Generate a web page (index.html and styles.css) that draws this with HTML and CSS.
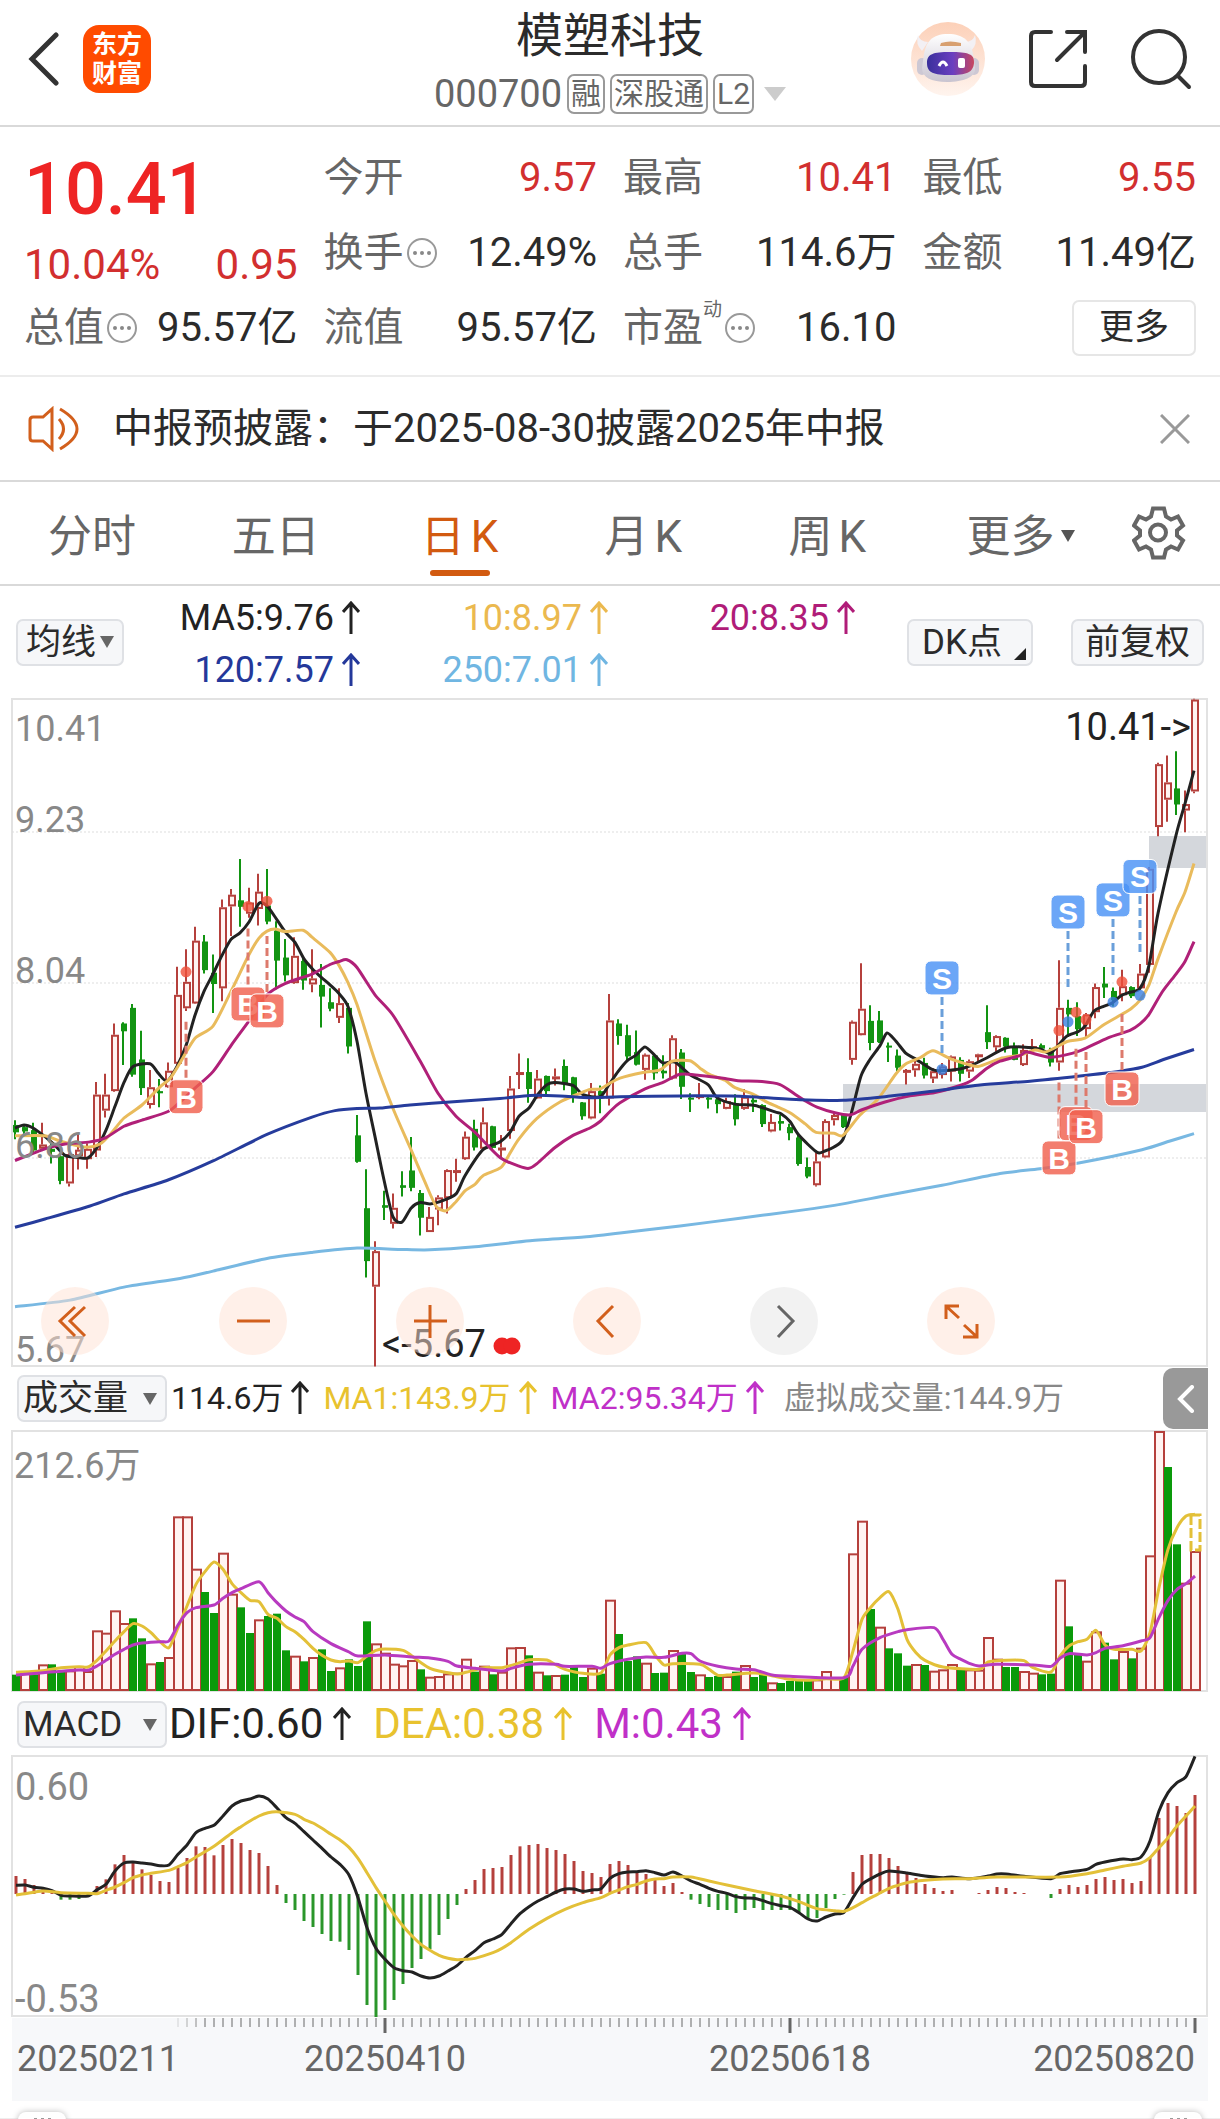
FILE: index.html
```html
<!DOCTYPE html>
<html lang="zh-CN">
<head>
<meta charset="utf-8">
<meta name="viewport" content="width=device-width, initial-scale=1">
<title>模塑科技 000700</title>
<link rel="stylesheet" href="styles.css">
</head>
<body>
<svg class="defs" aria-hidden="true">
  <symbol id="up" viewBox="0 0 18 34"><path d="M9 33V3M1 11 9 2l8 9" fill="none" stroke="currentColor" stroke-width="3"/></symbol>
  <symbol id="info" viewBox="0 0 32 32"><circle cx="16" cy="16" r="14" fill="none" stroke="#999" stroke-width="2"/><g fill="#888"><circle cx="9" cy="16" r="2"/><circle cx="16" cy="16" r="2"/><circle cx="23" cy="16" r="2"/></g></symbol>
</svg>

<header class="topbar">
  <div class="topbar-side">
    <button class="icon-btn" aria-label="返回"><svg width="32" height="54" viewBox="0 0 32 54"><path d="M28 3 4 27l24 24" fill="none" stroke="#333" stroke-width="5" stroke-linecap="round"/></svg></button>
    <a class="brand" href="#"><span>东方</span><span>财富</span></a>
  </div>
  <div class="heading">
    <h1>模塑科技</h1>
    <button class="code">000700<span class="tag">融</span><span class="tag">深股通</span><span class="tag">L2</span><i class="tri tri-light"></i></button>
  </div>
  <div class="topbar-side topbar-tools">
    <button class="icon-btn" aria-label="智能助手"><svg width="76" height="76" viewBox="0 0 76 76">
      <defs>
        <linearGradient id="halo" x1="0" y1="0" x2="0" y2="1"><stop offset="0" stop-color="#fcd0b8"/><stop offset="1" stop-color="#fff4ee"/></linearGradient>
        <linearGradient id="visor" x1="0" y1="0" x2="1" y2="0"><stop offset="0" stop-color="#3a2f9c"/><stop offset=".55" stop-color="#6a3fc0"/><stop offset="1" stop-color="#c8475e"/></linearGradient>
        <linearGradient id="shell" x1="0" y1="0" x2="0" y2="1"><stop offset="0" stop-color="#fff"/><stop offset="1" stop-color="#c9c4d0"/></linearGradient>
      </defs>
      <circle cx="38" cy="38" r="37" fill="url(#halo)"/>
      <path d="M8 14q-3 9 4 16l6-9q-8 0-10-7zM65 14q3 9-4 16l-6-9q8 0 10-7z" fill="#f3f0f4"/>
      <rect x="7" y="37" width="10" height="17" rx="5" fill="#cdc8d4"/><rect x="59" y="37" width="10" height="17" rx="5" fill="#cdc8d4"/>
      <path d="M38 13c16 0 23 8 25 20l2 14c1 9-12 14-28 14S12 56 12 47l2-14c2-12 8-20 24-20z" fill="url(#shell)"/>
      <path d="M31 22q9-3 20 0v3H30z" fill="#d8a070"/>
      <path d="M40 31c18 0 25 2 24 11-1 10-8 12-24 12S17 52 17 42c0-9 6-11 23-11z" fill="url(#visor)"/>
      <path d="M29 45q4-8 8 0" fill="none" stroke="#fff" stroke-width="3"/><rect x="48" y="37" width="7" height="10" rx="2" fill="#fff"/>
    </svg></button>
    <button class="icon-btn" aria-label="分享"><svg width="60" height="60" viewBox="0 0 60 60"><path d="M23 3H7q-4 0-4 4v46q0 4 4 4h46q4 0 4-4V37M39 3h18v20M56 4 29 31" fill="none" stroke="#333" stroke-width="4" stroke-linecap="round"/></svg></button>
    <button class="icon-btn" aria-label="搜索"><svg width="62" height="62" viewBox="0 0 62 62"><circle cx="29" cy="29" r="26" fill="none" stroke="#333" stroke-width="4"/><path d="m48 48 11 11" stroke="#333" stroke-width="4" stroke-linecap="round"/></svg></button>
  </div>
</header>

<section class="quote">
  <div class="price">10.41</div>
  <div class="pair change up"><span>10.04%</span><span>0.95</span></div>
  <div class="pair c2 r1"><span class="k">今开</span><span class="up">9.57</span></div>
  <div class="pair c3 r1"><span class="k">最高</span><span class="up">10.41</span></div>
  <div class="pair c4 r1"><span class="k">最低</span><span class="up">9.55</span></div>
  <div class="pair c2 r2"><span class="k">换手<svg class="info"><use href="#info"/></svg></span><span>12.49%</span></div>
  <div class="pair c3 r2"><span class="k">总手</span><span>114.6万</span></div>
  <div class="pair c4 r2"><span class="k">金额</span><span>11.49亿</span></div>
  <div class="pair c1 r3"><span class="k">总值<svg class="info"><use href="#info"/></svg></span><span>95.57亿</span></div>
  <div class="pair c2 r3"><span class="k">流值</span><span>95.57亿</span></div>
  <div class="pair c3 r3"><span class="k">市盈<sup>动</sup><svg class="info"><use href="#info"/></svg></span><span>16.10</span></div>
  <div class="pair c4 r3 end"><button class="more">更多</button></div>
</section>

<section class="notice">
  <svg width="52" height="46" viewBox="0 0 52 46" fill="none" stroke="#d25f1c" stroke-width="3"><path d="M24 3v40l-9-8H5q-3 0-3-3V14q0-3 3-3h10zM31 13q9 10 0 20M32 3q34 20 0 40"/></svg>
  <a href="#">中报预披露：于2025-08-30披露2025年中报</a>
  <button class="icon-btn" aria-label="关闭"><svg width="30" height="30" viewBox="0 0 30 30"><path d="m1 1 28 28M29 1 1 29" stroke="#999" stroke-width="3"/></svg></button>
</section>

<nav class="tabs">
  <button>分时</button>
  <button>五日</button>
  <button class="on">日<span>K</span></button>
  <button>月<span>K</span></button>
  <button>周<span>K</span></button>
  <button>更多<i class="tri tri-small"></i></button>
  <button class="gear" aria-label="设置"><svg width="54" height="54" viewBox="-1 0 54 53" fill="none" stroke="#666" stroke-width="4"><path d="M20 2h11l2 8 5 3 7-3 5 9-6 5v5l6 5-5 9-7-3-5 3-2 8H20l-2-8-5-3-7 3-5-9 6-5v-5l-6-5 5-9 7 3 5-3z"/><circle cx="25" cy="26" r="8"/></svg></button>
</nav>

<section class="legend">
  <button class="chip">均线<i class="tri tri-dark"></i></button>
  <div class="averages">
    <span class="ma5">MA5:9.76<svg class="arrow"><use href="#up"/></svg></span>
    <span class="ma10">10:8.97<svg class="arrow"><use href="#up"/></svg></span>
    <span class="ma20">20:8.35<svg class="arrow"><use href="#up"/></svg></span>
    <span class="ma120">120:7.57<svg class="arrow"><use href="#up"/></svg></span>
    <span class="ma250">250:7.01<svg class="arrow"><use href="#up"/></svg></span>
  </div>
  <div class="options">
    <button class="chip chip-dk">DK点<i class="corner"></i></button>
    <button class="chip chip-adjust">前复权</button>
  </div>
</section>

<section class="price-panel">
  <svg id="kline" class="chart" viewBox="0 0 1220 677" role="img" aria-label="日K线"></svg>
  <div class="controls">
    <button aria-label="最早"><svg viewBox="0 0 68 68"><path d="M34 20 19 34l15 15M44 20 29 34l15 15"/></svg></button>
    <button aria-label="缩小"><svg viewBox="0 0 68 68"><path d="M18 34h33"/></svg></button>
    <button aria-label="放大"><svg viewBox="0 0 68 68"><path d="M18 34h33M34 18v33"/></svg></button>
    <button aria-label="向左"><svg viewBox="0 0 68 68"><path d="M40 19 25 34l15 16"/></svg></button>
    <button aria-label="向右" class="off"><svg viewBox="0 0 68 68"><path d="m28 19 15 15-15 16"/></svg></button>
    <button aria-label="全屏"><svg viewBox="0 0 68 68"><path d="M32 19H19v13M20 20l12 11M50 37v13H36M49 49 37 38"/></svg></button>
  </div>
</section>

<section class="indicator">
  <button class="chip chip-wide">成交量<i class="tri tri-dark"></i></button>
  <span class="dark">114.6万<svg class="arrow"><use href="#up"/></svg></span>
  <span class="gold">MA1:143.9万<svg class="arrow"><use href="#up"/></svg></span>
  <span class="violet">MA2:95.34万<svg class="arrow"><use href="#up"/></svg></span>
  <span class="grey">虚拟成交量:144.9万</span>
  <button class="handle" aria-label="展开"><svg width="18" height="28" viewBox="0 0 18 28"><path d="M15 2 3 14l12 12" fill="none" stroke="#fff" stroke-width="4" stroke-linecap="round"/></svg></button>
</section>
<svg id="volume" class="chart" viewBox="0 0 1220 262" role="img" aria-label="成交量"></svg>

<section class="indicator indicator-macd">
  <button class="chip chip-wide">MACD<i class="tri tri-dark"></i></button>
  <span class="dark">DIF:0.60<svg class="arrow"><use href="#up"/></svg></span>
  <span class="gold">DEA:0.38<svg class="arrow"><use href="#up"/></svg></span>
  <span class="violet">M:0.43<svg class="arrow"><use href="#up"/></svg></span>
</section>
<svg id="macd" class="chart" viewBox="0 0 1220 263" role="img" aria-label="MACD"></svg>
<svg id="axis" class="chart" viewBox="0 0 1220 83" role="img" aria-label="日期"></svg>

<div class="range"><button aria-label="开始日期"><i></i><i></i><i></i></button><button aria-label="结束日期"><i></i><i></i><i></i></button></div>
<script src="charts.js"></script>
</body>
</html>
```
FILE: styles.css
```css
* { box-sizing: border-box; }
body {
  margin: 0;
  overflow-x: hidden;
  background: #fff;
  color: #2b2b2b;
  font-family: Roboto, "Noto Sans CJK SC", sans-serif;
}
button { margin: 0; padding: 0; border: 0; background: none; color: inherit; font: inherit; }
a { color: inherit; text-decoration: none; }
svg { display: block; flex: none; }
.defs { display: none; }
.icon-btn { display: flex; }

.tri { border: 6px solid transparent; border-top: 12px solid #555; border-bottom: 0; }
.tri-light { border-width: 14px 11px 0; border-top-color: #ccc; margin-left: 10px; }
.tri-small { display: inline-block; margin-left: 6px; border-width: 12px 7px 0; vertical-align: 10px; }
.tri-dark { border-width: 12px 7px 0; border-top-color: #666; }

.topbar { display: flex; height: 127px; border-bottom: 2px solid #d9d9d9; }
.topbar-side { flex: 1; display: flex; align-items: center; gap: 23px; padding: 0 28px 8px; }
.topbar-tools { justify-content: flex-end; gap: 42px; }
.brand {
  display: flex; flex-direction: column; justify-content: center; align-items: center;
  width: 68px; height: 68px; border-radius: 16px; background: #ff4b00; color: #fff;
  font-size: 25px; line-height: 29px; font-weight: 700;
}
.heading { display: flex; flex-direction: column; align-items: center; }
.heading h1 { margin: 7px 0 0; font-size: 47px; line-height: 58px; font-weight: 400; }
.code { display: flex; align-items: center; margin-top: 9px; color: #666; font-size: 38px; line-height: 40px; }
.tag {
  height: 40px; margin-left: 5px; padding: 0 2px; border: 2px solid #999; border-radius: 7px;
  font-size: 30px; line-height: 35px;
}

.quote {
  display: grid; grid-template-columns: repeat(4, 1fr); column-gap: 26px;
  grid-template-rows: repeat(3, 75px);
  padding: 13px 24px 0; height: 250px; border-bottom: 2px solid #ececec;
  font-size: 40px; line-height: 75px;
}
.price { grid-area: 1 / 1; color: #ee2424; font-size: 72px; font-weight: 500; line-height: 100px; }
.pair { display: flex; justify-content: space-between; align-items: center; white-space: nowrap; }
.change { grid-area: 2 / 1; padding-top: 24px; font-size: 42px; }
.up { color: #d22f2f; }
.k { display: flex; align-items: center; color: #666; }
.k sup { align-self: flex-start; font-size: 19px; line-height: 40px; }
.info { width: 32px; height: 32px; margin-left: 2px; }
.c1 { grid-column: 1; } .c2 { grid-column: 2; } .c3 { grid-column: 3; } .c4 { grid-column: 4; }
.r1 { grid-row: 1; } .r2 { grid-row: 2; } .r3 { grid-row: 3; }
.end { justify-content: flex-end; }
.more { width: 124px; height: 56px; border: 2px solid #e6e6e6; border-radius: 7px; font-size: 35px; line-height: 50px; }

.notice { display: flex; align-items: center; height: 105px; padding: 0 30px 0 28px; border-bottom: 2px solid #d9d9d9; font-size: 40px; line-height: 48px; }
.notice a { flex: 1; margin-left: 33px; }

.tabs { display: grid; grid-template-columns: repeat(5, 15.5%) 1fr 64px; height: 104px; padding-right: 34px; border-bottom: 2px solid #d9d9d9; color: #666; font-size: 44px; }
.tabs span { margin-left: 6px; }
.tabs .gear { display: flex; align-items: center; justify-content: flex-end; }
.tabs .on { position: relative; color: #d25a10; }
.tabs .on::after { content: ""; position: absolute; left: 50%; bottom: 8px; width: 60px; height: 6px; margin-left: -30px; border-radius: 3px; background: #d25a10; }

.legend { display: flex; align-items: center; height: 104px; padding: 0 16px; }
.chip {
  display: flex; align-items: center; justify-content: center; gap: 4px;
  height: 47px; padding: 0 8px; border: 2px solid #dfe1e5; border-radius: 7px; background: #f6f7f9;
  font-size: 35px; line-height: 43px; white-space: nowrap;
}
.legend .chip { margin-top: 8px; }
.legend .chip-dk { position: relative; padding: 0 29px 0 13px; }
.legend .chip-adjust { padding: 0 12px; }
.corner { position: absolute; right: 5px; bottom: 4px; border: 6px solid #222; border-top-color: transparent; border-left-color: transparent; }
.averages { display: grid; grid-template-columns: 236px 248px 247px; row-gap: 10px; padding-top: 12px; font-size: 36px; line-height: 42px; }
.averages span { display: flex; justify-content: flex-end; align-items: center; gap: 8px; }
.options { display: flex; gap: 38px; margin-left: auto; }
.arrow { width: 18px; height: 34px; }
.ma5 { color: #222; } .ma10 { color: #ebb94f; } .ma20 { color: #b01c78; } .ma120 { color: #24389a; } .ma250 { color: #70b6e2; }

.chart { width: 100%; height: auto; }
.price-panel { position: relative; }
.controls { position: absolute; left: 3.4%; right: 18.4%; bottom: 12px; display: flex; justify-content: space-between; }
.controls button { width: 68px; height: 68px; border-radius: 50%; background: rgba(255, 226, 211, .5); }
.controls path { fill: none; stroke: #d25f1c; stroke-width: 3; }
.controls .off { background: rgba(230, 230, 230, .5); }
.controls .off path { stroke: #666; }

.indicator { display: flex; align-items: center; gap: 14px; height: 63px; padding: 0 12px 0 17px; font-size: 32px; line-height: 40px; white-space: nowrap; }
.indicator span { display: flex; align-items: center; gap: 8px; padding-bottom: 2px; }
.indicator .chip + span { margin-left: -10px; }
.indicator .grey { margin-left: 6px; }
.chip-wide { width: 150px; padding: 0 8px 0 4px; justify-content: space-between; }
.indicator-macd { gap: 22px; padding-top: 2px; font-size: 42px; }
.indicator-macd span { gap: 10px; }
.indicator-macd .chip + span { margin-left: -20px; }
.dark { color: #222; } .gold { color: #e8c22e; } .violet { color: #c030c8; } .grey { color: #888; }
.handle { display: flex; align-items: center; justify-content: center; width: 45px; height: 61px; margin-left: auto; border-radius: 10px 0 0 10px; background: #999; }

.range { display: flex; justify-content: space-between; align-items: flex-start; height: 19px; padding: 11px 18px 0; overflow: hidden; background: linear-gradient(#eee, #eee) 0 17px / 100% 2px no-repeat; }
.range button { display: flex; justify-content: center; gap: 4px; width: 48px; height: 20px; padding-top: 6px; border-radius: 8px; background: #fff; box-shadow: 0 0 6px #bbb; }
.range i { width: 3px; height: 6px; background: #999; }

.chart text { font-size: 36px; fill: #888; }
.chart .note { font-size: 38px; fill: #222; }
.chart .scale { font-size: 38px; }
.chart .date { fill: #666; }
.chart .badge { font: 700 30px "Liberation Sans", sans-serif; fill: #fff; text-anchor: middle; }
```
FILE: charts.js
```javascript
const X0 = 16, STEP = 9;
const RED = '#b5403c', GREEN = '#129412';
const cx = i => X0 + STEP * i;

// Price rows: direction, high, body top, body bottom, low, on a grid of 2.306 units per chart pixel.
const K = 2.306;
const candles = `g 992 1003 1020 1036|g 1003 1008 1018 1025|g 998 1015 1062 1070|r 998 1048 1058 1062|g 1040 1058 1065 1092|g 1068 1075 1132 1140|r 1068 1070 1138 1145|r 1024 1060 1075 1106|r 1045 1058 1082 1104|r 904 933 1062 1077|r 885 933 970 986|r 769 795 925 927|g 766 769 787 865|g 724 733 887 892|g 786 852 918 934|r 876 916 957 965|g 897 925 930 962|r 859 878 916 918|r 638 703 862 864|r 598 673 734 740|r 546 578 723 724|g 565 580 646 654|g 610 652 678 745|r 483 501 688 718|r 459 472 499 567|g 390 485 500 546|r 456 490 516 525|r 424 465 505 543|g 413 497 534 540|g 533 555 624 690|g 574 617 658 672|r 570 613 676 678|g 617 625 670 691|r 598 665 679 697|g 632 680 707 778|g 688 720 735 741|r 688 722 756 768|g 722 733 822 838|g 980 1027 1088 1090|g 1105 1195 1317 1355|r 1271 1294 1376 1560|g 1155 1188 1194 1222|r 1161 1194 1231 1242|g 1110 1142 1148 1168|g 1031 1108 1148 1156|g 1153 1160 1217 1258|r 1192 1215 1250 1250|r 1165 1170 1198 1234|r 1105 1107 1172 1207|r 1081 1107 1113 1134|r 1018 1030 1082 1084|g 991 1012 1055 1062|r 963 997 1058 1062|g 1005 1006 1056 1058|r 1026 1055 1061 1077|r 890 919 1017 1035|r 838 881 885 920|g 849 881 920 952|r 876 896 942 943|g 889 890 925 935|r 873 891 897 912|g 852 867 907 923|g 892 893 935 952|g 950 951 983 991|r 906 925 988 990|g 912 925 935 976|r 701 762 942 958|g 759 769 798 818|g 772 796 845 853|g 785 835 864 866|r 838 841 876 899|g 840 843 884 899|g 842 878 884 896|r 796 803 896 898|g 828 836 915 943|g 930 940 944 973|r 906 934 941 944|g 936 940 944 965|g 938 944 955 976|r 940 948 966 967|g 932 953 990 1004|r 920 938 966 968|g 930 945 951 973|g 955 957 1001 1008|r 978 996 1018 1020|g 980 994 1000 1016|g 1000 1008 1022 1038|g 1025 1032 1093 1097|g 1078 1100 1122 1126|r 1067 1087 1142 1145|r 990 994 1078 1080|r 975 980 992 1004|g 976 978 1008 1010|r 762 765 853 864|r 630 735 796 797|g 727 763 814 831|g 740 762 812 814|g 813 820 824 858|g 829 843 871 879|r 874 876 882 910|r 853 862 877 892|g 848 860 889 896|r 872 879 896 906|r 860 868 888 896|r 843 845 880 903|g 847 853 885 903|r 852 856 880 895|r 839 840 843 858|g 727 789 812 828|r 796 798 824 834|g 801 802 822 836|g 813 822 853 854|r 817 830 865 867|r 805 821 826 835|g 815 819 827 833|g 825 832 859 868|r 623 733 859 878|g 714 733 748 800|g 720 752 782 798|r 745 748 782 800|r 677 685 743 757|g 639 677 686 710|g 686 694 715 730|r 645 683 704 718|g 683 685 706 710|r 632 654 688 692|r 408 412 634 652|r 168 171 316 337|r 151 213 253 304|g 141 227 264 288|r 232 263 278 328|r 20 22 234 238`
  .split('|').map(s => s.split(' ').map((v, n) => n ? v / K : v));

// Moving averages: chart x, price-grid y.
const averages = [
  ['#78b8e2', '15,1422 70,1407 124,1377 180,1357 213,1340 267,1311 312,1297 357,1287 400,1290 430,1291 475,1284 530,1270 590,1260 620,1252 680,1236 740,1218 800,1200 843,1185 888,1165 942,1142 1000,1115 1040,1104 1080,1090 1142,1060 1170,1040 1194,1023'],
  ['#222222', '15,1010 24,1003 33,1010 45,1030 55,1050 65,1073 78,1078 88,1079 97,1055 106,1015 115,960 124,905 133,868 150,862 158,883 167,902 177,868 186,820 195,750 204,695 213,655 222,612 231,575 240,560 249,535 259,492 267,498 277,530 286,560 295,582 304,620 312,642 321,662 330,680 339,700 348,730 357,810 366,930 375,1030 384,1130 393,1215 402,1227 411,1195 420,1182 430,1185 440,1180 456,1162 465,1120 483,1060 500,1042 510,1020 519,983 529,964 538,932 547,910 555,905 573,912 583,933 600,938 609,910 618,880 627,855 636,842 645,823 655,843 663,860 675,858 690,887 708,910 717,940 735,955 755,958 775,973 781,977 790,995 799,1027 817,1066 825,1063 834,1054 843,1036 852,970 861,890 870,852 880,820 887,791 896,810 906,838 915,850 932,875 940,878 960,874 970,867 987,848 1005,826 1022,823 1040,828 1050,838 1058,820 1067,798 1078,788 1085,775 1094,740 1103,730 1112,722 1121,705 1130,697 1140,688 1149,635 1158,515 1176,335 1185,262 1194,186'],
  ['#e9bb5c', '15,1028 45,1028 60,1040 85,1054 100,1047 112,1020 124,987 142,957 160,915 170,896 180,860 195,803 213,775 231,695 249,610 259,572 267,556 275,551 285,557 303,554 312,570 330,605 339,635 348,675 357,725 375,855 393,965 411,1060 425,1135 436,1190 446,1201 456,1180 465,1155 475,1140 483,1120 501,1101 510,1068 519,1035 537,988 560,950 580,930 590,921 600,920 609,908 620,895 643,882 660,876 672,856 690,855 700,872 710,887 725,900 735,917 753,932 765,948 778,962 790,975 805,1000 816,1020 834,1022 843,1027 860,980 878,943 896,885 906,862 920,848 933,832 950,850 963,860 978,868 1000,850 1020,842 1035,830 1045,835 1055,825 1068,810 1085,803 1103,773 1121,749 1131,735 1140,715 1149,680 1158,620 1176,512 1185,466 1194,400'],
  ['#b02078', '15,1085 45,1058 65,1047 90,1042 106,1032 124,1006 142,992 168,972 180,950 195,918 213,880 231,820 249,763 267,703 285,677 312,655 330,633 339,626 347,622 357,640 375,703 393,750 420,855 438,930 456,983 475,1020 500,1078 519,1098 529,1103 537,1092 555,1055 573,1027 590,1010 600,995 610,972 620,952 645,920 663,905 680,886 700,889 725,896 738,901 762,903 780,910 795,932 805,947 817,962 835,975 850,980 862,968 885,950 910,936 935,928 960,912 972,900 987,872 1000,856 1020,843 1027,835 1050,847 1072,838 1085,827 1108,802 1130,785 1140,770 1149,748 1162,697 1176,655 1185,626 1194,580'],
  ['#263c9c', '15,1239 45,1220 90,1190 124,1162 168,1130 213,1086 267,1025 312,985 335,970 357,965 380,964 410,957 450,950 500,942 530,935 560,936 590,940 620,938 680,936 740,937 800,945 843,946 888,937 930,926 980,911 1030,902 1080,890 1120,879 1142,870 1165,851 1194,829']
];

// Trade marks: kind, x, badge y, dot y, stem start, stem end.
const marks = [
  ['B', 186, 938, 650, 765, 895], ['B', 248, 724, 499, 550, 680], ['B', 267, 740, 487, 567, 697],
  ['B', 1059, 1079, 785, 905, 1035], ['B', 1076, 1000, 743, 827, 957], ['B', 1086, 1007, 760, 835, 965], ['B', 1122, 920, 673, 747, 877],
  ['S', 942, 664, 875, 708, 838], ['S', 1068, 512, 765, 556, 686], ['S', 1113, 484, 720, 528, 658], ['S', 1140, 430, 704, 475, 605]
];

// Volume tops, three units per chart pixel, 210 (top) to 990 (base).
const volumes = 'g941 r935 g940 r910 g910 g930 r928 r915 r930 r808 r815 r748 r786 g772 g832 r907 g903 r888 r466 r466 r623 g693 g756 r575 r698 g739 g816 r775 g765 g758 g868 r884 g901 r888 g865 g930 r919 g895 g915 g781 r847 r875 r908 r913 r897 g925 r947 r945 r937 r935 r893 g932 r914 g940 r932 r859 r858 g883 r932 g943 r942 g941 g917 g948 r920 g938 r716 g819 g900 g886 r905 g936 g935 r867 g875 g933 r940 g948 g945 r945 g932 r912 g948 g940 r964 g966 g960 g960 g958 r955 r930 r950 g950 r577 r479 g744 r797 g862 g877 g914 r909 g912 r929 r925 r909 g925 r925 r926 r828 r893 g918 g918 r930 r935 g940 g938 r656 g796 g880 r899 r811 g845 g895 r870 g892 r860 r583 r210 g318 g550 r665 r570'.split(' ');
const volumeMa = [
  ['#e3c038', '0,934 3,929 5,920 7,917 8,918 9,898 10,870 11,840 12,812 13,788 14,795 15,815 16,842 17,860 18,800 19,735 20,670 21,632 22,603 23,625 24,668 25,695 26,718 27,722 28,760 29,772 30,797 31,812 32,835 33,862 34,883 35,897 36,902 37,900 38,905 39,885 40,868 41,864 43,868 44,885 45,905 46,922 47,930 49,939 50,934 52,920 54,920 56,905 57,896 59,897 60,912 61,925 63,937 65,936 66,882 67,860 68,852 70,845 71,882 72,912 73,908 76,910 77,925 78,943 79,942 82,936 84,944 86,955 88,958 90,953 92,950 93,870 94,775 95,738 96,710 97,692 98,745 99,835 100,875 101,898 103,918 107,925 108,903 110,898 112,899 113,920 115,933 116,885 117,855 118,842 119,835 120,808 121,852 122,865 124,865 125,870 126,815 127,680 128,565 129,500 130,465 131,460'],
  ['#b83ac0', '0,942 3,935 7,927 8,928 9,915 10,898 11,880 12,865 13,852 14,846 16,842 17,840 18,792 19,755 20,740 22,732 23,712 24,695 25,683 27,662 28,695 29,725 30,750 31,768 32,782 33,812 35,848 37,873 38,885 41,882 44,888 46,891 48,901 49,915 51,922 54,930 55,922 57,910 60,910 61,916 64,916 65,922 66,908 68,895 70,888 72,889 74,877 75,878 76,900 78,916 80,924 82,926 84,942 86,946 92,950 93,915 94,865 96,830 98,812 99,806 102,800 103,835 104,880 105,895 106,908 107,915 109,910 113,912 115,916 116,892 117,878 119,882 120,875 121,862 123,854 125,840 126,830 127,770 128,718 129,685 130,668 131,645']
];

// MACD bar ends, three units per chart pixel, zero line at 459.
const bars = '405 414 432 442 452 476 476 474 468 435 415 370 342 362 385 402 420 423 380 351 316 318 343 312 294 306 327 336 375 432 486 507 540 558 579 600 602 627 702 792 828 807 777 729 681 654 624 582 534 492 444 417 384 381 378 342 316 312 309 321 327 339 360 390 396 408 369 360 372 390 399 415 435 426 453 476 489 498 507 507 516 507 501 507 507 507 507 516 534 531 501 474 461 393 342 339 339 351 375 399 411 429 441 450 447 459 459 456 447 438 441 453 456 459 459 471 444 432 438 432 414 408 417 414 426 420 350 231 186 195 216 162'.split(' ').map(Number);
const macdLines = [
  ['#222222', '0,433 1,432 2,439 3,442 4,449 5,463 6,465 8,465 9,446 10,430 11,390 12,366 13,363 14,366 15,369 16,374 17,372 18,340 19,312 20,275 21,262 22,253 23,225 24,195 25,180 26,174 27,165 28,174 29,201 30,230 31,247 32,272 33,297 34,322 35,348 36,370 37,402 38,470 39,560 40,622 41,655 42,680 43,689 44,693 45,705 46,711 47,705 48,690 49,674 50,649 51,629 52,605 53,594 54,580 55,548 56,518 57,497 58,480 59,467 60,453 61,444 62,444 63,451 64,447 65,443 66,412 67,398 68,393 69,392 70,389 71,395 72,402 73,393 74,405 75,420 76,430 77,442 78,451 79,457 80,467 81,471 82,472 83,479 84,488 85,494 86,499 87,515 88,534 89,540 90,528 91,519 92,514 93,470 94,430 95,413 96,399 97,390 99,396 101,405 103,410 104,408 106,413 108,405 109,399 110,399 112,406 115,413 116,398 117,393 119,385 120,370 121,363 123,354 124,356 125,348 126,300 127,210 128,155 129,125 130,107 131,46'],
  ['#e3c038', '0,462 1,458 3,450 5,455 8,457 9,458 10,448 11,438 12,425 13,410 14,402 15,397 17,388 18,377 19,365 20,348 22,316 24,275 25,257 26,240 27,225 28,215 29,212 31,220 32,235 33,246 34,262 35,280 36,297 37,319 38,352 39,395 40,440 41,480 42,520 43,555 44,585 45,610 46,628 47,643 48,652 49,656 50,655 51,652 53,635 54,622 55,605 57,565 59,532 61,505 63,485 65,470 66,457 67,447 68,437 69,430 70,420 71,414 72,413 73,408 75,408 77,420 79,432 82,449 85,465 87,482 89,503 91,509 92,511 93,500 94,485 95,470 96,456 97,442 98,433 99,425 101,418 103,414 106,413 109,408 116,408 119,398 121,387 123,376 125,366 126,350 127,320 128,290 129,255 130,225 131,195']
];

const rect = (x, y, w, h, attrs) => `<rect x="${x}" y="${y}" width="${w}" height="${h}" ${attrs}/>`;
const line = (x1, y1, x2, y2, stroke, w = 2, extra = '') => `<line x1="${x1}" y1="${y1}" x2="${x2}" y2="${y2}" stroke="${stroke}" stroke-width="${w}" ${extra}/>`;
const text = (x, y, s, cls = '', anchor = 'start') => `<text x="${x}" y="${y}" class="${cls}" text-anchor="${anchor}">${s}</text>`;
const frame = (y, h) => rect(12, y, 1195, h, 'fill="none" stroke="#e2e2e2" stroke-width="2"');
const curve = (color, points, fx, fy) => {
  const p = points.split(' ').map(s => s.split(',').map(Number)).map(([x, y]) => [fx(x), fy(y)]);
  let d = `M${p[0]}`;
  for (let i = 1; i < p.length; i++) {
    const a = p[i - 2] || p[i - 1], b = p[i - 1], c = p[i], e = p[i + 1] || c;
    d += `C${b[0] + (c[0] - a[0]) / 8} ${b[1] + (c[1] - a[1]) / 8} ${c[0] - (e[0] - b[0]) / 8} ${c[1] - (e[1] - b[1]) / 8} ${c}`;
  }
  return `<path d="${d}" fill="none" stroke="${color}" stroke-width="3" stroke-linejoin="round"/>`;
};
const draw = (id, html) => { document.getElementById(id).innerHTML = html; };

function drawKline() {
  let s = rect(843, 394, 364, 28, 'fill="#d4d7dc"') + rect(1149, 146, 58, 32, 'fill="#d4d7dc"') + frame(9, 667);
  for (const y of [142, 293, 468]) s += line(12, y, 1207, y, '#ddd', 1, 'stroke-dasharray="2 2"');
  candles.forEach(([dir, hi, top, bot, lo], i) => {
    const x = cx(i), h = Math.max(bot - top, 2);
    if (dir === 'g') s += line(x - 1, hi, x - 1, lo, GREEN) + rect(x - 3, top, 6, h, `fill="${GREEN}"`);
    else s += line(x - 1, hi, x - 1, top, RED) + line(x - 1, bot, x - 1, lo, RED) + rect(x - 3, top + 1, 6, Math.max(h - 2, 1), `fill="#fff4f2" stroke="${RED}" stroke-width="2"`);
  });
  for (const [c, p] of averages) s += curve(c, p, x => x, y => y / K);
  for (const [kind, x, by, dy, y1, y2] of marks) {
    const buy = kind === 'B';
    s += line(x, y1 / K, x, y2 / K, buy ? '#dd7a6c' : '#6a9fda', 3, 'stroke-dasharray="8 4"');
    s += `<circle cx="${x}" cy="${dy / K}" r="5.5" fill="${buy ? '#f04f38' : '#3a80e0'}" fill-opacity=".8"/>`;
    s += rect(x - 17, by / K - 17, 34, 34, `rx="6" fill="${buy ? '#f0604e' : '#4a92f5'}" fill-opacity=".82" stroke="#fff" stroke-width="1"`);
    s += text(x, by / K + 11, kind, 'badge', 'middle');
  }
  s += text(15, 51, '10.41') + text(15, 142, '9.23') + text(15, 293, '8.04') + text(15, 468, '6.86') + text(15, 672, '5.67');
  s += text(1191, 50, '10.41-&gt;', 'note', 'end') + text(382, 667, '&lt;-5.67', 'note');
  s += '<circle cx="502" cy="656" r="8.5" fill="#ee2424"/><circle cx="512" cy="656" r="8.5" fill="#ee2424"/>';
  draw('kline', s);
}

function drawVolume() {
  let s = frame(1, 260);
  const fy = y => (y - 210) / 3 + 1;
  volumes.forEach((v, i) => {
    const y = fy(+v.slice(1)), x = cx(i);
    s += v[0] === 'g' ? rect(x - 4, y, 8, 261 - y, 'fill="#0a9a0a"')
      : rect(x - 4, y + 1, 9, 259 - y, `fill="#fff4f2" stroke="${RED}" stroke-width="2"`);
  });
  s += rect(1191, 85, 9, 35, 'fill="none" stroke="#e3c038" stroke-width="3" stroke-dasharray="10 3"');
  for (const [c, p] of volumeMa) s += curve(c, p, cx, fy);
  s += text(14, 48, '212.6万');
  draw('volume', s);
}

function drawMacd() {
  let s = frame(1, 260);
  const fy = y => (y - 45) / 3 + 1, zero = fy(459);
  bars.forEach((v, i) => { if (v !== 459) s += line(cx(i), zero, cx(i), fy(v), v < 459 ? RED : '#2a962a', 3); });
  for (const [c, p] of macdLines) s += curve(c, p, cx, fy);
  s += text(15, 45, '0.60', 'scale') + text(15, 257, '-0.53', 'scale');
  draw('macd', s);
}

function drawAxis() {
  let s = rect(12, 0, 1196, 83, 'fill="#f7f8fa"');
  for (let i = 18; i < 132; i++) {
    const major = i === 41 || i === 86 || i === 131;
    s += line(cx(i), 0, cx(i), major ? 15 : 9, '#666', major ? 3 : 1, `opacity="${Math.min(1, (i - 17) / 4)}"`);
  }
  s += text(17, 53, '20250211', 'date') + text(385, 53, '20250410', 'date', 'middle') + text(790, 53, '20250618', 'date', 'middle') + text(1195, 53, '20250820', 'date', 'end');
  draw('axis', s);
}

drawKline();
drawVolume();
drawMacd();
drawAxis();
```
